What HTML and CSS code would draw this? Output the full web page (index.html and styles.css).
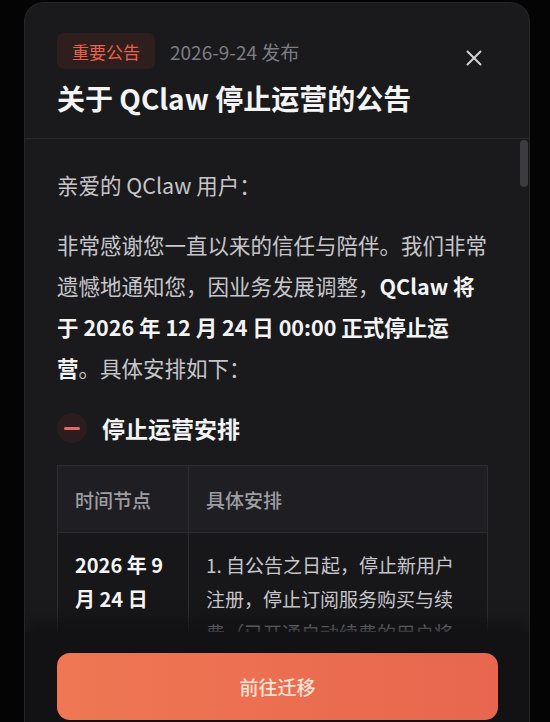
FILE: index.html
```html
<!DOCTYPE html>
<html lang="zh-CN">
<head>
    <meta charset="UTF-8">
    <meta name="viewport" content="width=device-width, initial-scale=1.0">
    <title>停止运营公告</title>
    <link rel="stylesheet" href="styles.css">
</head>
<body>
    <div class="notice-card">
        <div class="notice-header">
            <div class="notice-meta">
                <span class="tag">重要公告</span>
                <span class="date">2026-9-24 发布</span>
                <button class="close-btn" aria-label="关闭">
                    <svg width="16" height="16" viewBox="0 0 16 16"><path d="M1.5 1.5 L14.5 14.5 M14.5 1.5 L1.5 14.5" stroke="#d2d2d6" stroke-width="2" stroke-linecap="round"/></svg>
                </button>
            </div>
            <h1 class="notice-title">关于 QClaw 停止运营的公告</h1>
        </div>

        <div class="notice-body">
            <div class="scroll-thumb"></div>
            <p>亲爱的 QClaw 用户：</p>
            <p>非常感谢您一直以来的信任与陪伴。我们非常遗憾地通知您，因业务发展调整，<strong>QClaw 将于 2026 年 12 月 24 日 00:00 正式停止运营</strong>。具体安排如下：</p>

            <div class="section-head">
                <span class="section-icon"><span class="minus"></span></span>
                <h2>停止运营安排</h2>
            </div>

            <table class="plan-table">
                <thead>
                    <tr><th class="col-time">时间节点</th><th>具体安排</th></tr>
                </thead>
                <tbody>
                    <tr>
                        <td class="col-time"><strong>2026 年 9 月 24 日</strong></td>
                        <td>1. 自公告之日起，停止新用户注册，停止订阅服务购买与续费（已开通自动续费的用户将自动取消续费）。</td>
                    </tr>
                </tbody>
            </table>
        </div>

        <div class="notice-footer">
            <button class="primary-btn">前往迁移</button>
        </div>
    </div>
</body>
</html>
```

FILE: styles.css
```css
html, body {
    height: 100%;
    overflow: hidden;
}
body {
    margin: 0;
    background: #040405;
    font-family: "Noto Sans CJK SC", "Noto Sans", sans-serif;
    color: #c6c6ca;
}
.notice-card {
    margin: 2px 0 0 24px;
    width: 506px;
    height: 738px;
    background: #1a1a1d;
    border: 1px solid #26262a;
    border-bottom: none;
    border-radius: 20px 20px 0 0;
    display: flex;
    flex-direction: column;
    overflow: hidden;
    box-sizing: border-box;
}
.notice-header {
    padding: 30px 32px 21px 32px;
    border-bottom: 1px solid #2a2a2e;
}
.notice-meta {
    display: flex;
    align-items: center;
}
.tag {
    height: 36px;
    padding: 0 15px;
    display: flex;
    align-items: center;
    border-radius: 7px;
    background: #2f1e1e;
    color: #ea6048;
    font-size: 17px;
}
.date {
    margin-left: 15px;
    font-size: 19px;
    color: #7d7d82;
}
.close-btn {
    margin-left: auto;
    margin-right: 15px;
    margin-top: 14px;
    background: none;
    border: none;
    padding: 0;
    display: flex;
}
.notice-title {
    margin: 10px 0 0 0;
    font-size: 28px;
    line-height: 38px;
    font-weight: 700;
    color: #f4f4f5;
}
.notice-body {
    position: relative;
    flex: 1;
    min-height: 0;
    overflow: hidden;
    padding: 25px 40px 0 32px;
}
.scroll-thumb {
    position: absolute;
    top: 1px;
    right: 1px;
    width: 8px;
    height: 47px;
    border-radius: 4px;
    background: #3b3b40;
}
.notice-body p {
    margin: 0 0 19px 0;
    font-size: 21.5px;
    line-height: 41px;
}
.notice-body strong {
    color: #f4f4f5;
    font-weight: 700;
}
.section-head {
    display: flex;
    align-items: center;
    margin-top: 25px;
}
.section-icon {
    width: 30px;
    height: 30px;
    border-radius: 50%;
    background: #2d1c1d;
    display: flex;
    align-items: center;
    justify-content: center;
}
.minus {
    width: 16px;
    height: 3px;
    border-radius: 2px;
    background: #e06a6a;
}
.section-head h2 {
    margin: 0 0 0 15px;
    font-size: 23px;
    line-height: 30px;
    font-weight: 700;
    color: #f4f4f5;
}
.plan-table {
    margin-top: 22px;
    width: 431px;
    border-collapse: collapse;
    table-layout: fixed;
}
.plan-table th,
.plan-table td {
    border: 1px solid #2c2c31;
    text-align: left;
    vertical-align: top;
    padding: 0 17px;
}
.plan-table .col-time {
    width: 96px;
}
.plan-table th {
    height: 66px;
    vertical-align: middle;
    background: #1f1f23;
    color: #9d9da2;
    font-size: 19px;
    font-weight: 500;
}
.plan-table td {
    background: #17171a;
    padding-top: 15px;
    padding-right: 30px;
    font-size: 19px;
    line-height: 34px;
    color: #c6c6ca;
}
.plan-table td.col-time {
    padding-right: 17px;
    font-size: 20px;
}
.notice-footer {
    padding: 21px 31px 20px 32px;
    background: #121215;
    box-shadow: 0 -10px 14px rgba(18, 18, 21, 0.85);
    position: relative;
}
.primary-btn {
    width: 100%;
    height: 67px;
    border: none;
    border-radius: 13px;
    background: linear-gradient(to right, #ef7753, #e8664f);
    color: #fbe3d6;
    font-family: "Noto Sans CJK SC", sans-serif;
    font-size: 19px;
    font-weight: 500;
}
```
